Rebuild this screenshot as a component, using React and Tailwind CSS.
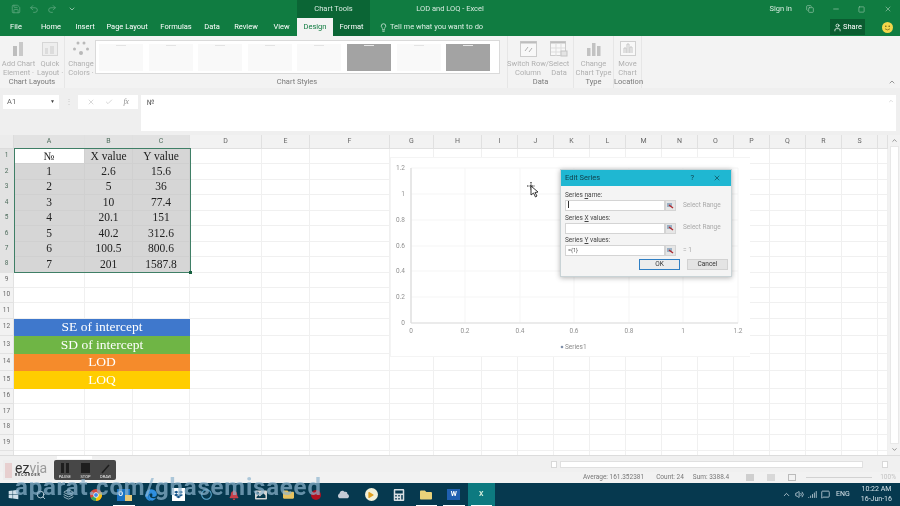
import React from 'react';
import { Save, Undo2, Redo2, Lightbulb, User, X, Check, ChevronUp, ChevronDown, Search, Layers, Volume2, MessageSquare, Minus, Square, Copy, Signal } from 'lucide-react';
import { FaWindows, FaEdge, FaDropbox, FaPlay, FaFolder, FaCalculator, FaImage, FaBell, FaCloud, FaRegCircle } from 'react-icons/fa';

const tabs = [
  ['File', 'w-[32px]'],
  ['Home', 'w-[38px]'],
  ['Insert', 'w-[30px]'],
  ['Page Layout', 'w-[54px]'],
  ['Formulas', 'w-[44px]'],
  ['Data', 'w-[28px]'],
  ['Review', 'w-[40px]'],
  ['View', 'w-[31px]'],
];

const columns = ['A', 'B', 'C', 'D', 'E', 'F', 'G', 'H', 'I', 'J', 'K', 'L', 'M', 'N', 'O', 'P', 'Q', 'R', 'S', ''];

const tableRows = [
  ['№', 'X value', 'Y value'],
  ['1', '2.6', '15.6'],
  ['2', '5', '36'],
  ['3', '10', '77.4'],
  ['4', '20.1', '151'],
  ['5', '40.2', '312.6'],
  ['6', '100.5', '800.6'],
  ['7', '201', '1587.8'],
];

const bands = {
  12: ['SE of intercept', 'bg-[#3f78cc]'],
  13: ['SD of intercept', 'bg-[#6fb545]'],
  14: ['LOD', 'bg-[#f58b2b]'],
  15: ['LOQ', 'bg-[#ffcd00]'],
};

const thumbs = [false, false, false, false, false, true, false, true];
const rows = Array.from({ length: 20 }, (_, i) => i + 1);
const xTicks = [['0', 411], ['0.2', 465], ['0.4', 520], ['0.6', 574], ['0.8', 629], ['1', 683], ['1.2', 738]];
const yTicks = [['1.2', 168], ['1', 194], ['0.8', 220], ['0.6', 246], ['0.4', 271], ['0.2', 297], ['0', 323]];

const RibbonItem = ({ lines, width, children }) => (
  <div className={`flex flex-col items-center ${width}`}>
    <div className="h-[18px] flex items-center justify-center">{children}</div>
    <div className="text-[7.5px] leading-[9px] text-[#b0b0b0] text-center whitespace-nowrap mt-[1px]">
      {lines.map((l) => <div key={l}>{l}</div>)}
    </div>
  </div>
);

const RibbonGroup = ({ label, width, children }) => (
  <div className={`flex flex-col h-full border-r border-[#e6e6e6] ${width}`}>
    <div className="flex-1 flex justify-center pt-[4px]">{children}</div>
    <div className="h-[11px] text-[7.5px] leading-[9px] text-[#7a7a7a] text-center whitespace-nowrap">{label}</div>
  </div>
);

const RangeButton = () => (
  <div className="w-[11px] h-[11px] bg-[#e6e6e6] border border-[#d4d4d4] flex items-center justify-center shrink-0">
    <svg width="7" height="6" viewBox="0 0 7 6">
      <rect x="0" y="0" width="5" height="4" fill="#9ab0c4" />
      <path d="M2 2 L6 5" stroke="#b02a30" strokeWidth="1.4" />
    </svg>
  </div>
);

const SeriesField = ({ label, hint, value, caret }) => (
  <div className="mb-[2.5px]">
    <div className="text-[6.5px] leading-[8px] text-[#444] mb-[1px]">{label}</div>
    <div className="flex items-center">
      <div className="w-[100px] h-[11px] bg-white border border-[#d4d4d4] text-[5.5px] leading-[9px] text-[#555] pl-[2px]">
        {caret ? <span className="inline-block w-px h-[7px] bg-[#333]" /> : value}
      </div>
      <RangeButton />
      <div className="ml-[7px] text-[6.5px] text-[#a9a9a9] whitespace-nowrap">{hint}</div>
    </div>
  </div>
);

const Slot = ({ active, line, children }) => (
  <div className={`w-[27.5px] h-full relative flex items-center justify-center ${active ? 'bg-[#0d7a80]' : ''}`}>
    {children}
    {line && <div className="absolute bottom-0 left-[3px] right-[3px] h-[1px] bg-white" />}
  </div>
);

export default function App() {
  return (
    <div className="relative w-[900px] h-[506px] overflow-hidden flex flex-col bg-white blur-[0.35px] font-['Roboto',sans-serif]">
      {/* Title bar */}
      <div className="h-[18px] bg-[#107c41] flex items-center text-[#d9ece1] text-[7.5px] shrink-0">
        <div className="w-[297px] flex items-center gap-[8px] pl-[11px] text-[#5aa67c]">
          <Save size={10} />
          <Undo2 size={10} />
          <Redo2 size={10} />
          <ChevronDown size={8} className="text-[#cfe6d8] ml-[3px]" />
        </div>
        <div className="w-[73px] h-full bg-[#0b6535] flex items-center justify-center">Chart Tools</div>
        <div className="w-[160px] text-center">LOD and LOQ - Excel</div>
        <div className="ml-auto flex items-center text-[#9cc9ae]">
          <span className="text-[#d9ece1] mr-[14px]">Sign in</span>
          <Copy size={8} className="mr-[18px]" />
          <Minus size={8} className="mr-[18px]" />
          <Square size={7} className="mr-[19px]" />
          <X size={8} className="mr-[8px]" />
        </div>
      </div>

      {/* Tabs */}
      <div className="h-[18px] bg-[#107c41] flex items-center text-white text-[7.5px] shrink-0">
        {tabs.map(([name, width]) => (
          <div key={name} className={`${width} text-center`}>{name}</div>
        ))}
        <div className="w-[36px] h-full bg-[#f3f3f3] text-[#107c41] flex items-center justify-center">Design</div>
        <div className="w-[37px] h-full bg-[#0b6535] flex items-center justify-center">Format</div>
        <div className="flex items-center gap-[2px] ml-[9px] text-[#dcefe4]">
          <Lightbulb size={9} />
          <span>Tell me what you want to do</span>
        </div>
        <div className="ml-auto h-[16px] w-[35px] bg-[#0a5c30] flex items-center justify-center gap-[1px]">
          <User size={9} />
          <span>Share</span>
        </div>
        <div className="w-[35px] flex justify-center pl-[10px]">
          <svg width="11" height="11" viewBox="0 0 11 11">
            <circle cx="5.5" cy="5.5" r="5.5" fill="#f2d64b" />
            <circle cx="3.8" cy="4.2" r="0.8" fill="#6f5f10" />
            <circle cx="7.2" cy="4.2" r="0.8" fill="#6f5f10" />
            <path d="M3 6.8 Q5.5 9 8 6.8" stroke="#6f5f10" strokeWidth="0.7" fill="none" />
          </svg>
        </div>
      </div>

      {/* Ribbon */}
      <div className="h-[52px] bg-[#f3f3f3] flex shrink-0 relative">
        <RibbonGroup label="Chart Layouts" width="w-[65px]">
          <div className="flex gap-[2px] pl-[2px]">
            <RibbonItem lines={['Add Chart', 'Element ·']} width="w-[32px]">
              <svg width="16" height="16" viewBox="0 0 16 16">
                <rect x="2" y="5" width="4" height="10" fill="#bdbdbd" />
                <rect x="8" y="1" width="4" height="14" fill="#c9c9c9" />
              </svg>
            </RibbonItem>
            <RibbonItem lines={['Quick', 'Layout ·']} width="w-[27px]">
              <svg width="16" height="16" viewBox="0 0 16 16">
                <rect x="0.5" y="1.5" width="15" height="13" fill="#eeeeee" stroke="#d6d6d6" />
                <rect x="3" y="7" width="3" height="6" fill="#dcdcdc" />
                <rect x="8" y="5" width="4" height="8" fill="#dcdcdc" />
              </svg>
            </RibbonItem>
          </div>
        </RibbonGroup>
        <div className="w-[30px] flex flex-col items-center pt-[4px] pl-[2px]">
          <RibbonItem lines={['Change', 'Colors ·']} width="w-[28px]">
            <svg width="16" height="16" viewBox="0 0 16 16" fill="#b9b9b9">
              <circle cx="5" cy="2" r="1.5" />
              <circle cx="11" cy="2" r="1.5" />
              <circle cx="1.5" cy="8" r="1.5" />
              <circle cx="14.5" cy="8" r="1.5" />
              <circle cx="8" cy="12" r="2" />
            </svg>
          </RibbonItem>
        </div>
        <div className="w-[413px] flex flex-col h-full border-r border-[#e6e6e6]">
          <div className="h-[34px] mt-[4px] w-[405px] bg-white border border-[#dadada] flex items-center gap-[5.6px] pl-[3px] overflow-hidden">
            {thumbs.map((dark, i) => (
              <div
                key={i}
                className={`w-[44px] h-[27px] shrink-0 flex justify-center pt-[1px] ${dark ? 'bg-[#a3a3a3]' : 'bg-[#f9f9f9]'}`}
              >
                <div className={`w-[10px] h-px ${dark ? 'bg-[#e8e8e8]' : 'bg-[#e4e4e4]'}`} />
              </div>
            ))}
          </div>
          <div className="mt-auto h-[11px] text-[7.5px] leading-[9px] text-[#7a7a7a] text-center pr-[8px]">Chart Styles</div>
        </div>
        <RibbonGroup label="Data" width="w-[66px]">
          <div className="flex gap-[1px]">
            <RibbonItem lines={['Switch Row/', 'Column']} width="w-[36px]">
              <svg width="17" height="16" viewBox="0 0 17 16">
                <rect x="0.5" y="0.5" width="16" height="15" fill="#f8f8f8" stroke="#cccccc" />
                <rect x="0.5" y="0.5" width="16" height="2" fill="#bdbdbd" />
                <path d="M5 10 L8 6 M9 11 L12 7" stroke="#b0b0b0" fill="none" />
              </svg>
            </RibbonItem>
            <RibbonItem lines={['Select', 'Data']} width="w-[24px]">
              <svg width="18" height="16" viewBox="0 0 18 16">
                <rect x="0.5" y="0.5" width="15" height="14" fill="#f8f8f8" stroke="#cccccc" />
                <rect x="0.5" y="0.5" width="15" height="2" fill="#bdbdbd" />
                <path d="M1 7 H15 M1 11 H15 M6 3 V15 M11 3 V15" stroke="#dddddd" />
                <rect x="11" y="10" width="6" height="5" fill="#e4e4e4" stroke="#c4c4c4" />
              </svg>
            </RibbonItem>
          </div>
        </RibbonGroup>
        <RibbonGroup label="Type" width="w-[40px]">
          <RibbonItem lines={['Change', 'Chart Type']} width="w-[36px]">
            <svg width="14" height="14" viewBox="0 0 14 14" fill="#c2c2c2">
              <rect x="0" y="6" width="3.5" height="8" />
              <rect x="5" y="1" width="3.5" height="13" />
              <rect x="10" y="4" width="3.5" height="10" />
            </svg>
          </RibbonItem>
        </RibbonGroup>
        <RibbonGroup label="Location" width="w-[28px]">
          <RibbonItem lines={['Move', 'Chart']} width="w-[26px]">
            <svg width="16" height="16" viewBox="0 0 16 16">
              <rect x="0.5" y="0.5" width="15" height="14" fill="#f8f8f8" stroke="#d0d0d0" />
              <path d="M4 12 V7 H6 V12 M7 12 V3 H9 V12 M10 12 V6 H12 V12" fill="none" stroke="#c6c6c6" />
            </svg>
          </RibbonItem>
        </RibbonGroup>
        <ChevronUp size={8} className="absolute right-[4px] bottom-[2px] text-[#666]" />
      </div>

      {/* Formula bar */}
      <div className="h-[47px] bg-[#efefef] flex items-start pt-[7px] shrink-0 text-[7.5px] text-[#666]">
        <div className="ml-[3px] w-[56px] h-[14px] bg-white flex items-center justify-between px-[4px]">
          <span>A1</span>
          <span className="text-[5px] text-[#444]">▼</span>
        </div>
        <div className="w-[19px] text-center text-[#c9c9c9] leading-[14px]">⋮</div>
        <div className="w-[60px] h-[14px] bg-white flex items-center justify-around px-[4px] text-[#c4c4c4]">
          <X size={8} />
          <Check size={8} />
          <span className="italic font-['Liberation_Serif',serif] text-[#888]">fx</span>
        </div>
        <div className="ml-[3px] w-[755px] h-[36px] bg-white px-[6px] pt-[2px] relative text-[#555]">
          №
          <ChevronUp size={6} className="absolute right-[2px] top-[3px] text-[#bbb]" />
        </div>
      </div>

      {/* Sheet */}
      <div className="h-[320px] flex shrink-0 overflow-hidden relative">
        <div className="w-[888px] overflow-hidden">
          <div className="grid grid-cols-[14px_71px_48px_57px_72px_48px_80px_44px_48px_repeat(11,36px)_10px] grid-rows-[14px_repeat(11,15.45px)_repeat(4,17.5px)_repeat(5,15.5px)]">
            <div className="bg-[#ececec] border-r border-b border-[#dcdcdc]" />
            {columns.map((c, i) => (
              <div
                key={i}
                className={`border-r border-b border-[#e0e0e0] text-[7px] leading-[13px] text-center ${i < 3 ? 'bg-[#e2e2e2] text-[#4f6d5d]' : 'bg-[#f2f2f2] text-[#666]'}`}
              >
                {c}
              </div>
            ))}
            {rows.map((r) => (
              <React.Fragment key={r}>
                <div className={`border-r border-b border-[#e2e2e2] text-[6.5px] flex items-center justify-center ${r <= 8 ? 'bg-[#e2e2e2] text-[#4f6d5d]' : 'bg-[#f2f2f2] text-[#666]'}`}>
                  {r < 20 ? r : ''}
                </div>
                {r <= 8 && tableRows[r - 1].map((v, i) => (
                  <div
                    key={i}
                    className={`flex items-center justify-center text-[11.5px] text-[#222] font-['Liberation_Serif',serif] border-r border-b border-[#d0d0d0] ${r === 1 && i === 0 ? 'bg-white' : 'bg-[#d6d6d6]'}`}
                  >
                    {v}
                  </div>
                ))}
                {bands[r] && (
                  <div className={`col-span-3 flex items-center justify-center text-[13.5px] text-white font-['Liberation_Serif',serif] ${bands[r][1]}`}>
                    {bands[r][0]}
                  </div>
                )}
                {columns.slice(r <= 8 || bands[r] ? 3 : 0).map((c, i) => (
                  <div key={i} className="border-r border-b border-[#f0f0f0]" />
                ))}
              </React.Fragment>
            ))}
          </div>
        </div>
        <div className="w-[12px] bg-[#f2f2f2] flex flex-col items-center justify-between py-[2px] text-[#555]">
          <ChevronUp size={7} />
          <div className="flex-1 w-[9px] my-[2px] bg-white border border-[#e8e8e8]" />
          <ChevronDown size={7} />
        </div>

        {/* Selection outline */}
        <div className="absolute left-[14px] top-[13px] w-[177px] h-[125px] border border-[#3f7f66] pointer-events-none">
          <div className="absolute -right-[2px] -bottom-[2px] w-[3px] h-[3px] bg-[#17603f]" />
        </div>

        {/* Chart */}
        <svg className="absolute left-[390px] top-[22px]" width="360" height="200" viewBox="390 157 360 200">
          <rect x="390.5" y="157.5" width="360" height="199" fill="white" stroke="#f4f4f4" />
          {yTicks.map(([label, y]) => (
            <g key={label}>
              <line x1="411" x2="738" y1={y} y2={y} stroke="#f5f5f5" />
              <text x="405" y={y + 2} fontSize="6.5" fill="#909090" textAnchor="end" fontFamily="Roboto">{label}</text>
            </g>
          ))}
          {xTicks.map(([label, x]) => (
            <g key={label}>
              <line x1={x} x2={x} y1="168" y2="323" stroke="#f5f5f5" />
              <text x={x} y="333" fontSize="6.5" fill="#909090" textAnchor="middle" fontFamily="Roboto">{label}</text>
            </g>
          ))}
          <line x1="411" x2="411" y1="168" y2="323" stroke="#d4d4d4" />
          <line x1="411" x2="738" y1="323" y2="323" stroke="#dcdcdc" />
          <circle cx="562" cy="347" r="1.3" fill="#7f8fa8" />
          <text x="565" y="349" fontSize="6.5" fill="#8a8a8a" fontFamily="Roboto">Series1</text>
        </svg>

        {/* Move cursor */}
        <svg className="absolute left-[527px] top-[47px]" width="12" height="16" viewBox="0 0 12 16">
          <path d="M4 0 V8 M0 4 H8" stroke="#222" strokeWidth="1.2" strokeDasharray="1.5 1" />
          <path d="M4 4 L4 13 L6.5 11 L8.5 15 L10 14 L8 10.5 L11 10 Z" fill="white" stroke="#222" strokeWidth="0.9" />
        </svg>

        {/* Edit Series dialog */}
        <div className="absolute left-[560px] top-[34px] w-[172px] h-[108px] bg-[#f4f4f4] border border-[#c9d3d6] shadow-[0_1px_5px_rgba(0,0,0,0.3)]">
          <div className="h-[16px] bg-[#1fb7d2] flex items-center justify-between px-[4px] text-[7.5px] text-[#10414d]">
            <span>Edit Series</span>
            <div className="flex items-center gap-[19px] mr-[6px]">
              <span>?</span>
              <X size={8} />
            </div>
          </div>
          <div className="pl-[4px] pt-[5px]">
            <SeriesField label={<>Series <span className="underline">n</span>ame:</>} hint="Select Range" caret />
            <SeriesField label={<>Series <span className="underline">X</span> values:</>} hint="Select Range" />
            <SeriesField label={<>Series <span className="underline">Y</span> values:</>} hint="= 1" value="={1}" />
            <div className="flex justify-end gap-[7px] pr-[3px] mt-[2px]">
              <div className="w-[41px] h-[11px] bg-[#ececec] border border-[#2f7fc4] text-[6.5px] leading-[9px] text-center text-[#333]">OK</div>
              <div className="w-[41px] h-[11px] bg-[#e4e4e4] border border-[#d2d2d2] text-[6.5px] leading-[9px] text-center text-[#333]">Cancel</div>
            </div>
          </div>
        </div>
      </div>

      {/* Sheet tabs + horizontal scrollbar */}
      <div className="h-[17px] bg-[#f0f0f0] border-t border-[#dcdcdc] flex items-center shrink-0 pr-[12px]">
        <div className="self-start ml-[57px] w-[35px] h-[3px] bg-white mr-auto" />
        <div className="w-[6px] h-[7px] bg-white border border-[#d8d8d8] mr-[3px]" />
        <div className="w-[303px] h-[7px] bg-white border border-[#e0e0e0]" />
        <div className="w-[6px] h-[7px] bg-white border border-[#d8d8d8] ml-[19px]" />
      </div>

      {/* Status bar */}
      <div className="h-[11px] bg-[#f2f2f2] flex items-center text-[6.5px] text-[#777] shrink-0 pl-[583px] whitespace-nowrap">
        <span>Average: 161.352381</span>
        <span className="ml-[12px]">Count: 24</span>
        <span className="ml-[9px]">Sum: 3388.4</span>
        <div className="ml-[17px] w-[8px] h-[7px] bg-[#cfcfcf]" />
        <div className="ml-[13px] w-[8px] h-[7px] bg-[#d8d8d8]" />
        <div className="ml-[13px] w-[8px] h-[7px] border border-[#bbbbbb]" />
        <div className="ml-[10px] w-[66px] h-px bg-[#d2d2d2]" />
        <span className="ml-[8px] text-[#c2c2c2]">100%</span>
      </div>

      {/* Taskbar */}
      <div className="h-[23px] bg-[#06394f] flex items-center shrink-0 text-white">
        <Slot><FaWindows size={11} className="text-[#cfe0ea]" /></Slot>
        <Slot><Search size={10} className="text-[#cfe0ea]" /></Slot>
        <Slot><Layers size={11} className="text-[#9fb9c6]" /></Slot>
        <Slot>
          <svg width="12" height="12" viewBox="0 0 12 12">
            <circle cx="6" cy="6" r="6" fill="#d9483b" />
            <path d="M6 6 L0.8 9 A6 6 0 0 0 6 12 Z" fill="#3aa757" />
            <path d="M6 6 L6 12 A6 6 0 0 0 11.2 3 Z" fill="#f4c20d" />
            <circle cx="6" cy="6" r="2.4" fill="#3f86e8" stroke="white" strokeWidth="0.8" />
          </svg>
        </Slot>
        <Slot line>
          <span className="relative w-[13px] h-[12px] bg-[#1a72c2] text-[7px] font-bold flex items-center pl-[1px]">
            O
            <span className="absolute right-[-2px] bottom-0 w-[7px] h-[6px] bg-[#e8c877]" />
          </span>
        </Slot>
        <Slot><FaEdge size={12} className="text-[#2f8fe0]" /></Slot>
        <Slot><span className="w-[13px] h-[13px] bg-white flex items-center justify-center"><FaDropbox size={9} className="text-[#14548a]" /></span></Slot>
        <Slot><FaRegCircle size={11} className="text-[#58a7cf]" /></Slot>
        <Slot><FaBell size={10} className="text-[#c9404a]" /></Slot>
        <Slot><FaImage size={12} className="text-[#d6d6d6]" /></Slot>
        <Slot><FaFolder size={11} className="text-[#e6c25f]" /></Slot>
        <Slot><span className="w-[10px] h-[10px] rounded-full bg-[#b01020]" /></Slot>
        <Slot><FaCloud size={11} className="text-[#c5ccd6]" /></Slot>
        <Slot><span className="w-[13px] h-[13px] rounded-full bg-[#f2f0d8] flex items-center justify-center"><FaPlay size={6} className="text-[#e0a020]" /></span></Slot>
        <Slot><FaCalculator size={12} className="text-[#d9dfe3]" /></Slot>
        <Slot line><FaFolder size={12} className="text-[#e9d27a]" /></Slot>
        <Slot line><span className="w-[13px] h-[11px] bg-[#1f5fb0] text-[7px] font-bold flex items-center justify-center">W</span></Slot>
        <Slot active line><span className="w-[13px] h-[11px] text-[#d5f0dc] text-[7px] font-bold flex items-center justify-center">X</span></Slot>
        <div className="ml-auto flex items-center text-[#d5e2e9] pr-[8px]">
          <ChevronUp size={9} />
          <Volume2 size={9} className="ml-[4px]" />
          <Signal size={9} className="ml-[4px]" />
          <MessageSquare size={9} className="ml-[4px]" />
          <span className="ml-[6px] text-[7px]">ENG</span>
          <div className="ml-[11px] text-[7px] leading-[9.5px] text-center">
            <div>10:22 AM</div>
            <div>16-Jun-16</div>
          </div>
        </div>
      </div>

      {/* Recorder widget */}
      <div className="absolute left-[3px] top-[460px] w-[113px] h-[20px] flex">
        <div className="w-[50px] bg-[#ececec]/90 flex items-center pl-[2px]">
          <div className="w-[7px] h-[15px] bg-[#e7cfcf] mr-[3px]" />
          <div className="flex flex-col leading-none">
            <span className="text-[14px] leading-[12px] text-[#333]">ez<span className="text-[#9a9a9a]">via</span></span>
            <span className="text-[3.5px] tracking-[1px] text-[#333] font-bold">RECORDER</span>
          </div>
        </div>
        <div className="flex-1 ml-[1px] bg-[#474747] rounded-[2px] flex items-end justify-around pb-[1px] text-[4px] text-[#eeeeee]">
          <div className="flex flex-col items-center">
            <div className="flex gap-[2px] mb-[1px]"><div className="w-[3px] h-[10px] bg-[#1e1e1e]" /><div className="w-[3px] h-[10px] bg-[#1e1e1e]" /></div>
            <span className="leading-[5px]">PAUSE</span>
          </div>
          <div className="flex flex-col items-center">
            <div className="w-[9px] h-[10px] mb-[1px] bg-[#1e1e1e]" />
            <span className="leading-[5px]">STOP</span>
          </div>
          <div className="flex flex-col items-center">
            <svg width="9" height="11" viewBox="0 0 9 11"><path d="M1 10 L8 2" stroke="#1e1e1e" strokeWidth="1.5" /></svg>
            <span className="leading-[5px]">DRAW</span>
          </div>
        </div>
      </div>

      {/* Watermark */}
      <div className="absolute left-[15px] top-[480px] text-[24px] leading-[14px] font-bold tracking-[0.8px] text-[#8fb5cf]/70 whitespace-nowrap pointer-events-none">
        aparat.com/ghasemisaeed
      </div>
    </div>
  );
}
